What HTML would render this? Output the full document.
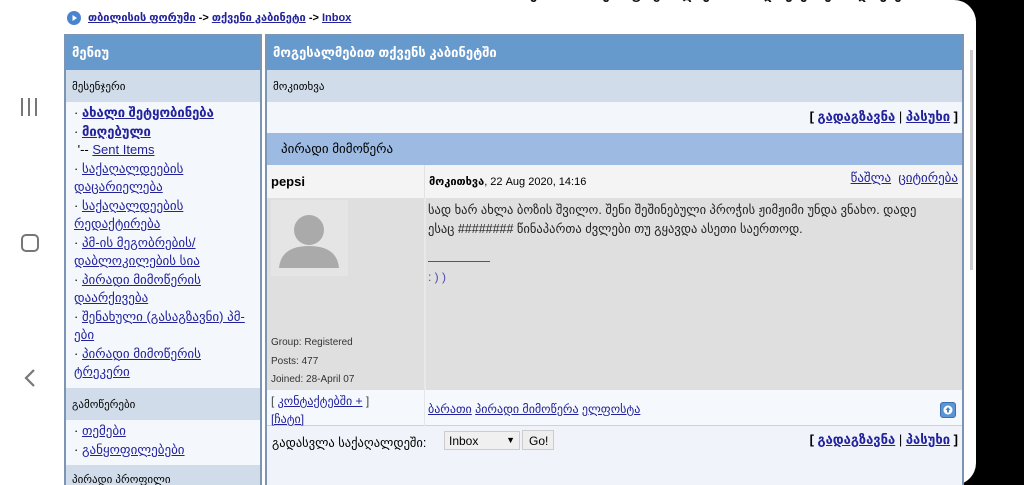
<!DOCTYPE html>
<html style="overflow:hidden"><head><meta charset="utf-8"><style>
*{margin:0;padding:0;box-sizing:border-box}
html,body{width:1024px;height:485px;overflow:hidden}
body{background:#000;font-family:"Liberation Sans","DejaVu Sans",sans-serif;font-size:12px;color:#000;position:relative}
.a{position:absolute}
a{color:#22229c;text-decoration:underline}
.page{left:0;top:0;width:976px;height:485px;background:#fff;border-radius:0 22px 22px 0}
.hdr{background:#6699cc;color:#fff;font-weight:bold;font-size:13px;padding:9px 6px}
.sub{background:#d0dcea;font-size:11px;padding:10px 6px}
.li{font-size:13px;line-height:18.5px}
</style></head><body>
<div class="a page"></div>
<div class="a" style="left:530px;top:-13px;font-size:13px;font-weight:bold;color:#111;letter-spacing:2px">ენ ი ან აქ ოფიციალ ეპ ოპ ადაკ ემ ეპ ადაკ ეპ ა</div>
<div class="a" style="left:21px;top:98px;width:18px;height:18px;">
<div class="a" style="left:0;top:0;width:2px;height:18px;background:#777"></div>
<div class="a" style="left:7px;top:0;width:2px;height:18px;background:#777"></div>
<div class="a" style="left:14px;top:0;width:2px;height:18px;background:#777"></div></div>
<div class="a" style="left:21px;top:234px;width:18px;height:18px;border:2.5px solid #777;border-radius:5px"></div>
<svg class="a" style="left:22px;top:368px" width="16" height="20"><path d="M12 2 L4 10 L12 18" stroke="#777" stroke-width="2.2" fill="none"/></svg>
<div class="a" style="left:67px;top:11px;width:14px;height:14px;border-radius:50%;background:#4a84d0"><svg width="14" height="14"><path d="M5.5 4 L10 7 L5.5 10Z" fill="#fff"/></svg></div>
<div class="a" style="left:88px;top:11px;font-size:11px;font-weight:bold"><a href="#">თბილისის ფორუმი</a> -&gt; <a href="#">თქვენი კაბინეტი</a> -&gt; <a href="#">Inbox</a></div>
<div class="a" style="left:64px;top:34px;width:198px;height:455px;border:2px solid #7d95b5;border-bottom:none;background:#f4f7fc;overflow:hidden">
<div class="hdr" style="height:34px">მენიუ</div>
<div class="sub" style="height:32px">მესენჯერი</div>
<div class="li" style="padding:2px 6px 0 8px;height:286px">
· <a href="#" style="font-weight:bold">ახალი შეტყობინება</a><br>
· <a href="#" style="font-weight:bold">მიღებული</a><br>
&nbsp;'-- <a href="#">Sent Items</a><br>
· <a href="#">საქაღალდეების დაცარიელება</a><br>
· <a href="#">საქაღალდეების რედაქტირება</a><br>
· <a href="#">პმ-ის მეგობრების/ დაბლოკილების სია</a><br>
· <a href="#">პირადი მიმოწერის დაარქივება</a><br>
· <a href="#">შენახული (გასაგზავნი) პმ-ები</a><br>
· <a href="#">პირადი მიმოწერის ტრეკერი</a></div>
<div class="sub" style="height:32px">გამოწერები</div>
<div class="li" style="padding:2px 6px 0 8px;height:45px">· <a href="#">თემები</a><br>· <a href="#">განყოფილებები</a></div>
<div class="sub" style="height:32px;padding-top:8px">პირადი პროფილი</div>
</div>
<div class="a" style="left:265px;top:34px;width:699px;height:455px;border:2px solid #7d95b5;border-bottom:none;background:#f0f4fa;overflow:hidden">
<div class="hdr" style="height:34px">მოგესალმებით თქვენს კაბინეტში</div>
<div class="sub" style="height:32px">მოკითხვა</div>
<div style="height:31px;background:#f3f6fb;text-align:right;padding:7px 4px;font-weight:bold;font-size:13px">[ <a href="#">გადაგზავნა</a> <span style="font-weight:normal">|</span> <a href="#">პასუხი</a> ]</div>
<div style="height:32px;background:#9cbae2;padding:8px 14px;font-size:13px">პირადი მიმოწერა</div>
<div style="height:33px;background:#f4f4f4;position:relative">
<div class="a" style="left:4px;top:9px;font-weight:bold;font-size:13px">pepsi</div>
<div class="a" style="left:157px;top:0;width:1px;height:33px;background:#e2e2e2"></div>
<div class="a" style="left:162px;top:10px;font-size:11px"><b>მოკითხვა</b>, 22 Aug 2020, 14:16</div>
<div class="a" style="right:4px;top:5px;font-size:13px"><a href="#">წაშლა</a>&nbsp; <a href="#">ციტირება</a></div></div>
<div style="height:192px;background:#dfdfdf;position:relative">
<div class="a" style="left:157px;top:0;width:2px;height:192px;background:#e8e8e8"></div>
<div class="a" style="left:4px;top:2px;width:77px;height:76px;background:#e5e5e5"><svg width="77" height="76"><circle cx="38" cy="30" r="15" fill="#aaa"/><path d="M8 68 Q10 46 38 46 Q66 46 68 68Z" fill="#aaa"/></svg></div>
<div class="a" style="left:4px;top:136px;font-size:10px;line-height:18.7px;color:#333">Group: Registered<br>Posts: 477<br>Joined: 28-April 07</div>
<div class="a" style="left:161px;top:3px;width:535px;font-size:12.5px;line-height:19px;color:#222">სად ხარ ახლა ბოზის შვილო. შენი შეშინებული პროჭის ჟიმჟიმი უნდა ვნახო. დადე<br>ესაც ######## წინაპართა ძვლები თუ გყავდა ასეთი საერთოდ.</div>
<div class="a" style="left:161px;top:63px;width:62px;border-top:1px solid #4b4bb0"></div>
<div class="a" style="left:161px;top:72px;color:#4b4bb0;font-size:12px">: ) )</div></div>
<div style="height:36px;background:#f5f8fc;position:relative;border-bottom:1px solid #c8d4e4">
<div class="a" style="left:157px;top:0;width:1px;height:36px;background:#e6e6e6"></div>
<div class="a" style="left:4px;top:2px;font-size:12px;line-height:18px;color:#444">[ <a href="#">კონტაქტებში +</a> ]<br><a href="#">[ჩატი]</a></div>
<div class="a" style="left:161px;top:12px;font-size:12px"><a href="#">ბარათი</a> <a href="#">პირადი მიმოწერა</a> <a href="#">ელფოსტა</a></div>
<div class="a" style="right:6px;top:12px;width:16px;height:16px;border-radius:3px;background:#5b95d6;border:1px solid #3b6fb0"><svg width="14" height="14"><circle cx="7" cy="7" r="4.5" fill="#fff"/><path d="M7 4 L9.5 7 H8 V9.5 H6 V7 H4.5Z" fill="#4a84c6"/></svg></div></div>
<div style="position:relative;height:60px">
<div class="a" style="left:5px;top:9px;font-size:12.5px">გადასვლა საქაღალდეში:</div>
<div class="a" style="left:177px;top:5px;width:76px;height:19px;background:#f0f0f0;border:1px solid #ccc;font-size:12px;padding:2px 4px">Inbox<span style="position:absolute;right:4px;top:3px;font-size:9px">▼</span></div>
<div class="a" style="left:255px;top:4px;width:32px;height:20px;background:#eee;border:1px solid #ccc;font-size:12px;padding:3px 6px">Go!</div>
<div class="a" style="right:4px;top:6px;font-weight:bold;font-size:13px">[ <a href="#">გადაგზავნა</a> <span style="font-weight:normal">|</span> <a href="#">პასუხი</a> ]</div></div>
</div>
<div class="a" style="left:970px;top:50px;width:3px;height:220px;background:#ccc"></div>
</body></html>
